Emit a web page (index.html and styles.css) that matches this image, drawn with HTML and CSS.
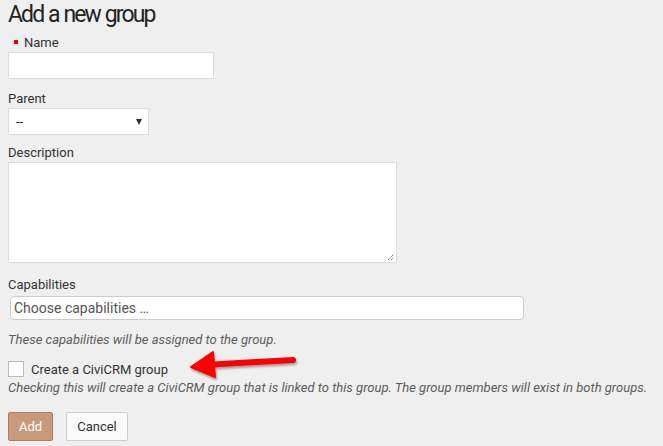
FILE: index.html
```html
<!DOCTYPE html>
<html>
<head>
<meta charset="utf-8">
<link rel="stylesheet" href="styles.css">
</head>
<body>
<div class="page">
  <h1 class="title">Add a new group</h1>
  <div class="field">
    <label class="label required"><span class="req"></span>Name</label>
    <input class="input name-input" type="text">
  </div>
  <div class="field">
    <label class="label">Parent</label>
    <div class="select"><span>--</span><span class="caret"></span></div>
  </div>
  <div class="field">
    <label class="label">Description</label>
    <div class="textarea"><svg class="grip" width="8" height="8" viewBox="0 0 8 8"><path d="M1 7 L7 1 M4 7 L7 4" stroke="#444" stroke-width="1" stroke-dasharray="1 1"/></svg></div>
  </div>
  <div class="field">
    <label class="label">Capabilities</label>
    <div class="chooser">Choose capabilities …</div>
    <p class="help">These capabilities will be assigned to the group.</p>
  </div>
  <div class="check-row">
    <span class="checkbox"></span>
    <span class="check-label">Create a CiviCRM group</span>
    <svg class="arrow" width="115" height="36" viewBox="0 0 115 36">
      <defs><filter id="sh" x="-10%" y="-30%" width="130%" height="170%"><feDropShadow dx="1" dy="2" stdDeviation="1.2" flood-color="#000" flood-opacity="0.35"/></filter></defs>
      <g filter="url(#sh)">
        <path d="M16 19 L105 14" stroke="#f00" stroke-width="6" stroke-linecap="round"/>
        <path d="M3 21 L25 6 L27 31 Z" fill="#f00" stroke="#f00" stroke-width="2" stroke-linejoin="round"/>
      </g>
    </svg>
  </div>
  <p class="help help2">Checking this will create a CiviCRM group that is linked to this group. The group members will exist in both groups.</p>
  <div class="actions">
    <button class="btn btn-primary">Add</button>
    <button class="btn btn-cancel">Cancel</button>
  </div>
</div>
</body>
</html>
```
FILE: styles.css
```css
html, body {
  margin: 0;
  padding: 0;
  background: #efefef;
}
body {
  font-family: Roboto, "Liberation Sans", sans-serif;
  color: #333;
  overflow: hidden;
}
.page {
  padding: 0 8px;
  display: flex;
  flex-direction: column;
}
.title {
  font-size: 23px;
  font-weight: 400;
  letter-spacing: -1.9px;
  word-spacing: 1px;
  margin: 0;
  height: 35px;
  line-height: 30px;
  color: #222;
}
.field {
  display: flex;
  flex-direction: column;
  align-items: flex-start;
}
.label {
  font-size: 13px;
  line-height: 16px;
  color: #333;
  margin-bottom: 1px;
  display: flex;
  align-items: center;
}
.req {
  width: 4px;
  height: 4px;
  background: #e00;
  margin: 0 6px;
  position: relative;
  top: -1px;
}
.input {
  box-sizing: border-box;
  border: 1px solid #ddd;
  background: #fff;
  outline: none;
  margin: 0;
  padding: 0;
}
.name-input {
  width: 206px;
  height: 27px;
  margin-bottom: 12px;
}
.select {
  box-sizing: border-box;
  width: 141px;
  height: 27px;
  border: 1px solid #ddd;
  background: #fff;
  display: flex;
  align-items: center;
  justify-content: space-between;
  padding: 0 6px 0 7px;
  font-size: 13px;
  color: #222;
  margin-bottom: 10px;
}
.caret {
  width: 0;
  height: 0;
  border-left: 3px solid transparent;
  border-right: 3px solid transparent;
  border-top: 6px solid #333;
}
.textarea {
  box-sizing: border-box;
  width: 389px;
  height: 101px;
  border: 1px solid #ddd;
  background: #fff;
  position: relative;
  margin-bottom: 14px;
}
.grip {
  position: absolute;
  right: 1px;
  bottom: 1px;
}
.chooser {
  box-sizing: border-box;
  width: 514px;
  height: 24px;
  margin-left: 2px;
  margin-top: 2px;
  border: 1px solid #ccc;
  border-radius: 4px;
  background: #fff;
  font-size: 14px;
  line-height: 22px;
  padding-left: 3px;
  color: #555;
}
.help {
  margin: 12px 0 0;
  font-size: 13px;
  font-style: italic;
  color: #5c5c5c;
  line-height: 16px;
}
.check-row {
  display: flex;
  align-items: center;
  margin-top: 11px;
  height: 20px;
  position: relative;
}
.checkbox {
  box-sizing: border-box;
  width: 16px;
  height: 16px;
  border: 1px solid #bbb;
  background: #fff;
  margin-right: 7px;
}
.check-label {
  font-size: 13px;
  color: #333;
}
.arrow {
  position: absolute;
  left: 180px;
  top: -13px;
}
.help2 {
  margin-top: 1px;
}
.actions {
  display: flex;
  gap: 13px;
  margin-top: 16px;
}
.btn {
  font-family: Roboto, "Liberation Sans", sans-serif;
  font-size: 13px;
  height: 29px;
  padding: 0;
  border: 1px solid #ccc;
  border-radius: 2px;
  background: #fafafa;
  color: #333;
  margin: 0;
}
.btn-primary {
  width: 45px;
  background: #c89a7b;
  border-color: #b07b5c;
  color: #fff;
}
.btn-cancel {
  width: 62px;
}
```
